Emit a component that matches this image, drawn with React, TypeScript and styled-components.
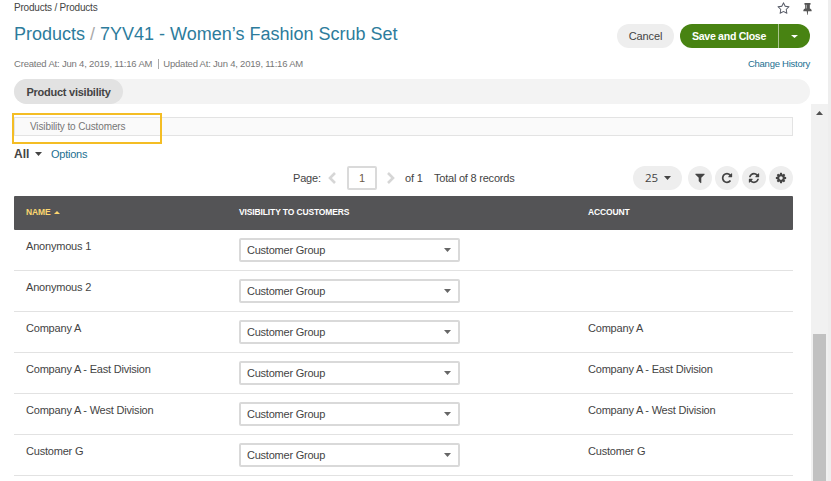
import React from "react";
import styled, { createGlobalStyle } from "styled-components";

const GlobalStyle = createGlobalStyle`
  * { box-sizing: border-box; }
  html, body { margin: 0; padding: 0; background: #fff; overflow: hidden; }
  body { font-family: "Liberation Sans", Arial, sans-serif; font-size: 11px; color: #444; }
  button { font-family: inherit; border: 0; padding: 0; cursor: pointer; }
  a { text-decoration: none; }
`;

const Page = styled.div`
  display: flex;
  width: 831px;
  height: 481px;
  overflow: hidden;
`;
const Main = styled.main`
  flex: 1;
  display: flex;
  flex-direction: column;
  min-width: 0;
`;
const PageEdge = styled.div`
  width: 3px;
  background: #eeeeee;
`;
const Header = styled.header`
  height: 104px;
  padding: 0 18px 0 14px;
`;
const TopLine = styled.div`
  display: flex;
  justify-content: space-between;
  align-items: center;
  height: 16px;
`;
const Label = styled.span<{ $track?: number }>`
  letter-spacing: ${(p) => p.$track ?? 0}px;
  white-space: nowrap;
`;
const Breadcrumbs = styled.nav`
  font-size: 10px;
  line-height: 16px;
`;
const Shortcuts = styled.div`
  display: flex;
  gap: 11px;
  margin-right: -4px;
`;
const TitleRow = styled.div`
  display: flex;
  align-items: center;
  height: 40px;
`;
const Title = styled.h1`
  flex: 1;
  margin: -5px 0 0;
  font-size: 18px;
  font-weight: 400;
  line-height: 24px;
  color: #2d7c9c;
`;
const Slash = styled.span`
  color: #aaa;
`;
const CancelButton = styled.button`
  width: 57px;
  height: 24px;
  margin-right: 6px;
  border-radius: 12px;
  background: #eeeeee;
  color: #444;
  font-size: 11px;
`;
const SplitButton = styled.div`
  display: flex;
  width: 130px;
  height: 24px;
  border-radius: 12px;
  overflow: hidden;
`;
const SaveButton = styled.button`
  width: 98px;
  background: #488312;
  color: #fff;
  font-size: 10.6px;
  font-weight: 700;
`;
const SaveMenu = styled.button`
  display: flex;
  flex: 1;
  align-items: center;
  justify-content: center;
  border-left: 1px solid #a9c58e;
  background: #488312;
`;
const MetaRow = styled.div`
  display: flex;
  justify-content: space-between;
  height: 23px;
  font-size: 9.5px;
  line-height: 16px;
  color: #777;
`;
const Separator = styled.span`
  display: inline-block;
  width: 1px;
  height: 10px;
  margin: 0 4px 0 6px;
  vertical-align: -2px;
  background: #aaa;
`;
const Link = styled.a`
  color: #1c6f91;
`;
const TabBar = styled.div`
  height: 25px;
  border-radius: 13px;
  background: #f3f3f3;
`;
const Tab = styled.button`
  width: 109px;
  height: 25px;
  border-radius: 13px;
  background: #e2e2e2;
  color: #444;
  font-size: 11px;
  font-weight: 700;
`;
const ScrollArea = styled.div`
  display: flex;
  flex: 1;
  min-height: 0;
`;
const Content = styled.section`
  width: 811px;
  padding: 13px 18px 0 14px;
`;
const SectionBar = styled.div`
  position: relative;
  height: 19px;
  padding-left: 15px;
  border: 1px solid #e3e3e3;
  background: #fafafa;
  font-size: 10px;
  line-height: 17px;
  color: #777;
`;
const Highlight = styled.div`
  position: absolute;
  left: -3px;
  top: -5px;
  width: 150px;
  height: 31px;
  border: 2px solid #f4bd24;
`;
const ViewRow = styled.div`
  display: flex;
  align-items: center;
  height: 30px;
  padding-top: 6px;
`;
const ViewName = styled.strong`
  width: 21px;
  font-size: 12px;
`;
const OptionsLink = styled(Link)`
  margin-left: 9px;
  font-size: 11px;
`;
const Toolbar = styled.div`
  display: flex;
  align-items: center;
  height: 24px;
  padding-left: 279px;
`;
const PageInput = styled.input`
  width: 30px;
  height: 24px;
  margin: 0 10px 0 11px;
  padding: 0;
  border: 2px solid #dadada;
  border-radius: 2px;
  text-align: center;
  font: 11px "Liberation Sans", Arial, sans-serif;
  color: #6b5a48;
`;
const PageLabel = styled.span`
  width: 35px;
  letter-spacing: -0.2px;
`;
const OfPages = styled.span`
  width: 29px;
  margin-left: 10px;
  white-space: nowrap;
  letter-spacing: -0.2px;
`;
const Tools = styled.div`
  display: flex;
  gap: 3px;
  margin-left: auto;
`;
const PageSize = styled.button`
  display: flex;
  align-items: center;
  width: 49px;
  height: 24px;
  margin-right: 3px;
  padding: 0 0 1px 12px;
  gap: 6px;
  border-radius: 12px;
  background: #eeeeee;
  color: #444;
  font: 11.5px "Open Sans", sans-serif;
`;
const RoundButton = styled.button`
  display: flex;
  align-items: center;
  justify-content: center;
  width: 24px;
  height: 24px;
  border-radius: 50%;
  background: #eeeeee;
`;
const Grid = styled.div`
  margin-top: 6px;
`;
const Columns = styled.div`
  display: grid;
  grid-template-columns: 225px 349px 205px;
`;
const HeadRow = styled(Columns)`
  height: 34px;
  border-radius: 1px;
  background: #545456;
  font-size: 8.5px;
  font-weight: 700;
  line-height: 32px;
`;
const HeadCell = styled.div<{ $first?: boolean }>`
  display: flex;
  align-items: center;
  height: 32px;
  gap: 3px;
  padding-left: ${(p) => (p.$first ? 12 : 0)}px;
  color: ${(p) => (p.$first ? "#fcd670" : "#fff")};
`;
const BodyRow = styled(Columns)`
  height: 41px;
  border-bottom: 1px solid #e2e2e2;
`;
const Cell = styled.div<{ $first?: boolean }>`
  padding-top: 8px;
  padding-left: ${(p) => (p.$first ? 12 : 0)}px;
  line-height: 17px;
  letter-spacing: -0.2px;
`;
const Select = styled.div`
  display: flex;
  align-items: center;
  justify-content: space-between;
  width: 221px;
  height: 24px;
  padding: 0 7px 0 6px;
  border: 2px solid #d9d9d9;
  border-radius: 2px;
  letter-spacing: -0.23px;

  svg {
    margin-bottom: 1px;
  }
`;
const Scrollbar = styled.div`
  display: flex;
  flex-direction: column;
  align-items: center;
  width: 17px;
  background: #f1f1f1;
`;
const ScrollUp = styled.div`
  display: flex;
  align-items: center;
  justify-content: center;
  height: 17px;
`;
const Thumb = styled.div`
  width: 13px;
  flex: 1;
  margin-top: 213px;
  background: #c1c1c1;
`;

const Caret = ({ color = "#444", up = false, w = 7, h = 4 }: { color?: string; up?: boolean; w?: number; h?: number }) => (
  <svg width={w} height={h} viewBox="0 0 8 4" preserveAspectRatio="none">
    <path d={up ? "M0 4L4 0L8 4Z" : "M0 0H8L4 4Z"} fill={color} />
  </svg>
);

const Chevron = ({ right = false }: { right?: boolean }) => (
  <svg width="8" height="12" viewBox="0 0 8 12" fill="none" stroke="#d6d6d6" strokeWidth="2.6">
    <path d={right ? "M1 1L6 6L1 11" : "M7 1L2 6L7 11"} />
  </svg>
);

const Icon = ({ d, size = 12, color = "#444" }: { d: string; size?: number; color?: string }) => (
  <svg width={size} height={size} viewBox="0 0 1792 1792" fill={color}>
    <path d={d} />
  </svg>
);

const icons = {
  star: "M1201 1004l306-297-422-62-189-382-189 382-422 62 306 297-73 421 378-199 377 199zm527-357q0 22-26 48l-363 354 86 500q1 7 1 20 0 50-41 50-19 0-40-12l-449-236-449 236q-22 12-40 12-21 0-31.5-14.500t-10.500-35.500q0-6 2-20l86-500-364-354q-25-27-25-48 0-37 56-46l502-73 225-455q19-41 49-41t49 41l225 455 502 73q56 9 56 46z",
  pin: "M800 864v-448q0-14-9-23t-23-9-23 9-9 23v448q0 14 9 23t23 9 23-9 9-23zm672 352q0 26-19 45t-45 19h-429l-51 483q-2 12-10.500 20.500t-20.500 8.500h-1q-27 0-32-27l-76-485h-404q-26 0-45-19t-19-45q0-123 78.500-221.500t177.500-98.500v-512q-52 0-90-38t-38-90 38-90 90-38h640q52 0 90 38t38 90-38 90-90 38v512q99 0 177.500 98.500t78.500 221.500z",
  filter: "M1595 295q17 41-14 70l-493 493v742q0 42-39 59-13 5-25 5-27 0-45-19l-256-256q-19-19-19-45v-486l-493-493q-31-29-14-70 17-39 59-39h1280q42 0 59 39z",
  redo: "M1664 256v448q0 26-19 45t-45 19h-448q-42 0-59-40-17-39 14-69l138-138q-148-137-349-137-104 0-198.500 40.500t-163.500 109.500-109.500 163.500-40.500 198.500 40.500 198.500 109.500 163.500 163.500 109.500 198.500 40.500q119 0 225-52t179-147q7-10 23-12 15 0 25 9l137 138q9 8 9.500 20.500t-7.500 22.500q-109 132-264 204.500t-327 72.500q-156 0-298-61t-245-164-164-245-61-298 61-298 164-245 245-164 298-61q147 0 284.500 55.500t244.500 156.500l130-129q29-31 70-14 39 17 39 59z",
  refresh: "M1639 1056q0 5-1 7-64 268-268 434.500t-478 166.500q-146 0-282.500-55t-243.500-157l-129 129q-19 19-45 19t-45-19-19-45v-448q0-26 19-45t45-19h448q26 0 45 19t19 45-19 45l-137 137q71 66 161 102t187 36q134 0 250-65t186-179q11-17 53-117 8-23 30-23h192q13 0 22.500 9.500t9.500 22.500zm25-800v448q0 26-19 45t-45 19h-448q-26 0-45-19t-19-45 19-45l138-138q-148-137-349-137-134 0-250 65t-186 179q-11 17-53 117-8 23-30 23h-199q-13 0-22.500-9.500t-9.500-22.500v-7q65-268 270-434.500t480-166.500q146 0 284 55.500t245 156.500l130-129q19-19 45-19t45 19 19 45z",
  cog: "M1152 896q0-106-75-181t-181-75-181 75-75 181 75 181 181 75 181-75 75-181zm512-109v222q0 12-8 23t-20 13l-185 28q-19 54-39 91 35 50 107 138 10 12 10 25t-9 23q-27 37-99 108t-94 71q-12 0-26-9l-138-108q-44 23-91 38-16 136-29 186-7 28-36 28h-222q-14 0-24.500-8.500t-11.500-21.500l-28-184q-49-16-90-37l-141 107q-10 9-25 9-14 0-25-11-126-114-165-168-7-10-7-23 0-12 8-23 15-21 51-66.500t54-70.500q-27-50-41-99l-183-27q-13-2-21-12.500t-8-23.500v-222q0-12 8-23t19-13l186-28q14-46 39-92-40-57-107-138-10-12-10-24 0-10 9-23 26-36 98.500-107.500t94.500-71.500q13 0 26 10l138 107q44-23 91-38 16-136 29-186 7-28 36-28h222q14 0 24.500 8.500t11.500 21.500l28 184q49 16 90 37l142-107q9-9 24-9 13 0 25 10 129 119 165 170 7 8 7 22 0 12-8 23-15 21-51 66.500t-54 70.500q26 50 41 98l183 28q13 2 21 12.500t8 23.500z",
};

const rows = [
  { name: "Anonymous 1", account: "" },
  { name: "Anonymous 2", account: "" },
  { name: "Company A", account: "Company A" },
  { name: "Company A - East Division", account: "Company A - East Division" },
  { name: "Company A - West Division", account: "Company A - West Division" },
  { name: "Customer G", account: "Customer G" },
];

export default function App() {
  return (
    <>
      <GlobalStyle />
      <Page>
        <Main>
          <Header>
            <TopLine>
              <Breadcrumbs><Label $track={-0.2}>Products / Products</Label></Breadcrumbs>
              <Shortcuts>
                <Icon d={icons.star} size={13} color="#565a66" />
                <Icon d={icons.pin} size={13} color="#565656" />
              </Shortcuts>
            </TopLine>
            <TitleRow>
              <Title><Label>Products <Slash>/</Slash> 7YV41 - Women’s Fashion Scrub Set</Label></Title>
              <CancelButton><Label $track={-0.15}>Cancel</Label></CancelButton>
              <SplitButton>
                <SaveButton><Label $track={-0.3}>Save and Close</Label></SaveButton>
                <SaveMenu aria-label="More save options"><Caret color="#fff" h={3} /></SaveMenu>
              </SplitButton>
            </TitleRow>
            <MetaRow>
              <div>
                <Label $track={-0.19}>Created At: Jun 4, 2019, 11:16 AM</Label>
                <Separator />
                <Label $track={-0.21}>Updated At: Jun 4, 2019, 11:16 AM</Label>
              </div>
              <Link><Label $track={-0.24}>Change History</Label></Link>
            </MetaRow>
            <TabBar><Tab><Label $track={-0.25}>Product visibility</Label></Tab></TabBar>
          </Header>
          <ScrollArea>
            <Content>
              <SectionBar>
                <Label $track={-0.12}>Visibility to Customers</Label>
                <Highlight />
              </SectionBar>
              <ViewRow>
                <ViewName>All</ViewName>
                <Caret />
                <OptionsLink><Label $track={-0.25}>Options</Label></OptionsLink>
              </ViewRow>
              <Toolbar>
                <PageLabel>Page:</PageLabel>
                <Chevron />
                <PageInput defaultValue="1" aria-label="Page" />
                <Chevron right />
                <OfPages>of 1</OfPages>
                <Label $track={-0.22}>Total of 8 records</Label>
                <Tools>
                  <PageSize>25 <Caret /></PageSize>
                  <RoundButton aria-label="Filters"><Icon d={icons.filter} /></RoundButton>
                  <RoundButton aria-label="Refresh"><Icon d={icons.redo} /></RoundButton>
                  <RoundButton aria-label="Reset"><Icon d={icons.refresh} /></RoundButton>
                  <RoundButton aria-label="Settings"><Icon d={icons.cog} /></RoundButton>
                </Tools>
              </Toolbar>
              <Grid>
                <HeadRow>
                  <HeadCell $first><Label $track={-0.13}>NAME</Label><Caret color="#fcd670" up w={6} h={3} /></HeadCell>
                  <HeadCell><Label $track={-0.13}>VISIBILITY TO CUSTOMERS</Label></HeadCell>
                  <HeadCell><Label $track={-0.13}>ACCOUNT</Label></HeadCell>
                </HeadRow>
                {rows.map((r) => (
                  <BodyRow key={r.name}>
                    <Cell $first>{r.name}</Cell>
                    <Cell><Select>Customer Group <Caret color="#666" /></Select></Cell>
                    <Cell>{r.account}</Cell>
                  </BodyRow>
                ))}
              </Grid>
            </Content>
            <Scrollbar>
              <ScrollUp><Caret up color="#505050" /></ScrollUp>
              <Thumb />
            </Scrollbar>
          </ScrollArea>
        </Main>
        <PageEdge />
      </Page>
    </>
  );
}
